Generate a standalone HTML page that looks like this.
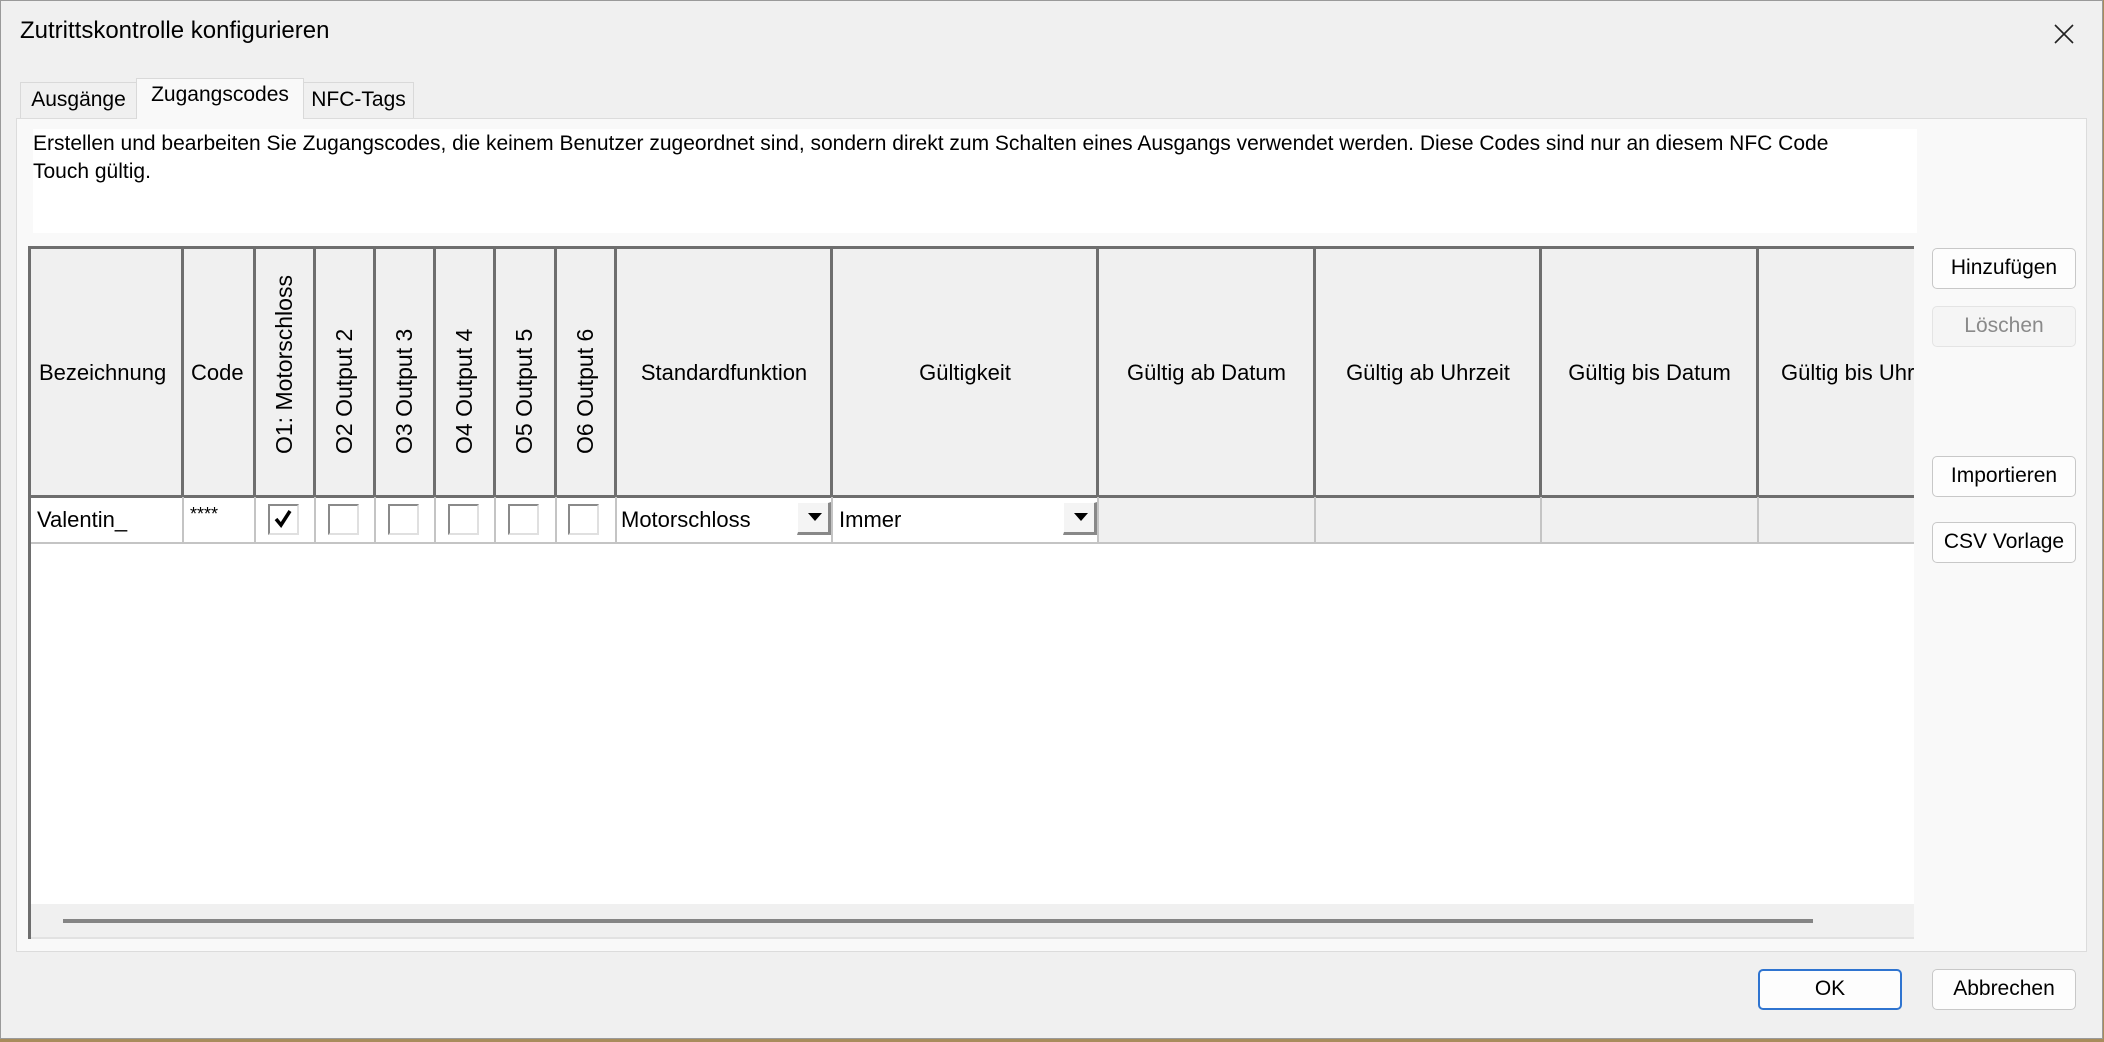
<!DOCTYPE html>
<html><head><meta charset="utf-8"><style>
*{box-sizing:border-box;margin:0;padding:0}
body{width:2104px;height:1042px;background:#a88c5c;font-family:"Segoe UI","Liberation Sans",sans-serif;font-size:21px;color:#000;position:relative;overflow:hidden}
.a{position:absolute}
#dlg{left:0;top:0;width:2103px;height:1039px;background:#f0f0f0;border:1px solid #9a9a9a}
.tab{position:absolute;border:1px solid #d9d9d9;border-bottom:none;background:#f0f0f0;text-align:center;line-height:34px;font-size:21px}
.btn{position:absolute;width:144px;height:41px;border:1px solid #c8c8c8;border-radius:5px;background:#fdfdfd;text-align:center;line-height:38px;font-size:21px;white-space:nowrap}
.vd{position:absolute;top:248px;height:248px;width:3px;background:#6e6e6e}
.rd{position:absolute;top:496px;height:47px;width:2px;background:#c4c4c4}
.vt{position:absolute;top:453px;transform-origin:0 0;transform:rotate(-90deg);white-space:nowrap;line-height:26px;font-size:23px}
.ht{position:absolute;top:359px;text-align:center;white-space:nowrap;font-size:22px}
.cb{position:absolute;top:503px;width:31px;height:31px;border:2px solid #8a8a8a;border-right-color:#e0e0e0;border-bottom-color:#e0e0e0;background:#fff}
.dd{position:absolute;top:501px;width:34px;height:33px;background:#f4f4f4;border:1px solid #fff;border-right:3px solid #888;border-bottom:3px solid #888}
.dd:after{content:"";position:absolute;left:10px;top:10px;border-left:7px solid transparent;border-right:7px solid transparent;border-top:8px solid #000}
.rt{position:absolute;top:506px;font-size:22px}
</style></head><body>
<div id="dlg" class="a">
<div class="a" style="left:19px;top:16px;font-size:24px">Zutrittskontrolle konfigurieren</div>
<svg class="a" style="left:2053px;top:23px" width="20" height="20"><path d="M1 1L19 19M19 1L1 19" stroke="#222" stroke-width="1.6"/></svg>

<div class="tab" style="left:19px;top:81px;width:117px;height:37px">Ausgänge</div>
<div class="tab" style="left:135px;top:77px;width:168px;height:41px;background:#f9f9f9;line-height:32px;z-index:2">Zugangscodes</div>
<div class="tab" style="left:302px;top:81px;width:111px;height:37px">NFC-Tags</div>

<div class="a" style="left:15px;top:117px;width:2071px;height:834px;background:#f9f9f9;border:1px solid #dcdcdc"></div>
<div class="a" style="left:32px;top:128px;width:1884px;height:104px;background:#fff;padding:1px 0 0 0;line-height:28px;white-space:nowrap">Erstellen und bearbeiten Sie Zugangscodes, die keinem Benutzer zugeordnet sind, sondern direkt zum Schalten eines Ausgangs verwendet werden. Diese Codes sind nur an diesem NFC Code<br>Touch gültig.</div>

<div class="a" style="left:27px;top:245px;width:1886px;height:693px;background:#fff;border-bottom:2px solid #e2e2e2"></div>
<div class="a" style="left:27px;top:245px;width:1886px;height:251px;background:#f0f0f0;border-top:3px solid #6e6e6e"></div>
<div class="a" style="left:27px;top:245px;width:3px;height:693px;background:#6e6e6e"></div>
<div class="a" style="left:27px;top:494px;width:1886px;height:3px;background:#6e6e6e"></div>
<div class="a" style="left:1097px;top:497px;width:816px;height:46px;background:#f0f0f0"></div>
<div class="a" style="left:30px;top:541px;width:1883px;height:2px;background:#c4c4c4"></div>
<div class="a" style="left:30px;top:903px;width:1883px;height:33px;background:#f0f0f0"></div>
<div class="a" style="left:62px;top:918px;width:1750px;height:4px;background:#858585"></div>

<div class="vd" style="left:180px"></div><div class="vd" style="left:252px"></div><div class="vd" style="left:312px"></div><div class="vd" style="left:372px"></div><div class="vd" style="left:432px"></div><div class="vd" style="left:492px"></div><div class="vd" style="left:553px"></div><div class="vd" style="left:613px"></div><div class="vd" style="left:829px"></div><div class="vd" style="left:1095px"></div><div class="vd" style="left:1312px"></div><div class="vd" style="left:1538px"></div><div class="vd" style="left:1755px"></div>
<div class="rd" style="left:181px"></div><div class="rd" style="left:253px"></div><div class="rd" style="left:313px"></div><div class="rd" style="left:373px"></div><div class="rd" style="left:433px"></div><div class="rd" style="left:493px"></div><div class="rd" style="left:554px"></div><div class="rd" style="left:614px"></div><div class="rd" style="left:830px"></div><div class="rd" style="left:1096px"></div><div class="rd" style="left:1313px"></div><div class="rd" style="left:1539px"></div><div class="rd" style="left:1756px"></div>

<div class="ht" style="left:38px">Bezeichnung</div>
<div class="ht" style="left:190px">Code</div>
<div class="ht" style="left:616px;width:214px">Standardfunktion</div>
<div class="ht" style="left:832px;width:264px">Gültigkeit</div>
<div class="ht" style="left:1098px;width:215px">Gültig ab Datum</div>
<div class="ht" style="left:1315px;width:224px">Gültig ab Uhrzeit</div>
<div class="ht" style="left:1541px;width:215px">Gültig bis Datum</div>
<div class="ht" style="left:1780px;width:133px;overflow:hidden;text-align:left">Gültig bis Uhrzeit</div>

<div class="vt" style="left:270px">O1: Motorschloss</div>
<div class="vt" style="left:330px">O2 Output 2</div>
<div class="vt" style="left:390px">O3 Output 3</div>
<div class="vt" style="left:450px">O4 Output 4</div>
<div class="vt" style="left:510px">O5 Output 5</div>
<div class="vt" style="left:571px">O6 Output 6</div>

<div class="rt" style="left:36px">Valentin_</div>
<div class="a" style="left:189px;top:503px;font-size:18px">****</div>
<div class="cb" style="left:267px"><svg width="27" height="27" style="position:absolute;left:0;top:0"><path d="M6 13L11 19L20 5" stroke="#000" stroke-width="3.5" fill="none"/></svg></div>
<div class="cb" style="left:327px"></div><div class="cb" style="left:387px"></div><div class="cb" style="left:447px"></div><div class="cb" style="left:507px"></div><div class="cb" style="left:567px"></div>
<div class="rt" style="left:620px">Motorschloss</div>
<div class="dd" style="left:796px"></div>
<div class="rt" style="left:838px">Immer</div>
<div class="dd" style="left:1062px"></div>

<div class="btn" style="left:1931px;top:247px">Hinzufügen</div>
<div class="btn" style="left:1931px;top:305px;color:#8a8a8a;background:#f5f5f5;border-color:#e4e4e4">Löschen</div>
<div class="btn" style="left:1931px;top:455px">Importieren</div>
<div class="btn" style="left:1931px;top:521px">CSV Vorlage</div>

<div class="btn" style="left:1757px;top:968px;border:2px solid #2f74d0;line-height:36px">OK</div>
<div class="btn" style="left:1931px;top:968px">Abbrechen</div>
</div>
</body></html>
